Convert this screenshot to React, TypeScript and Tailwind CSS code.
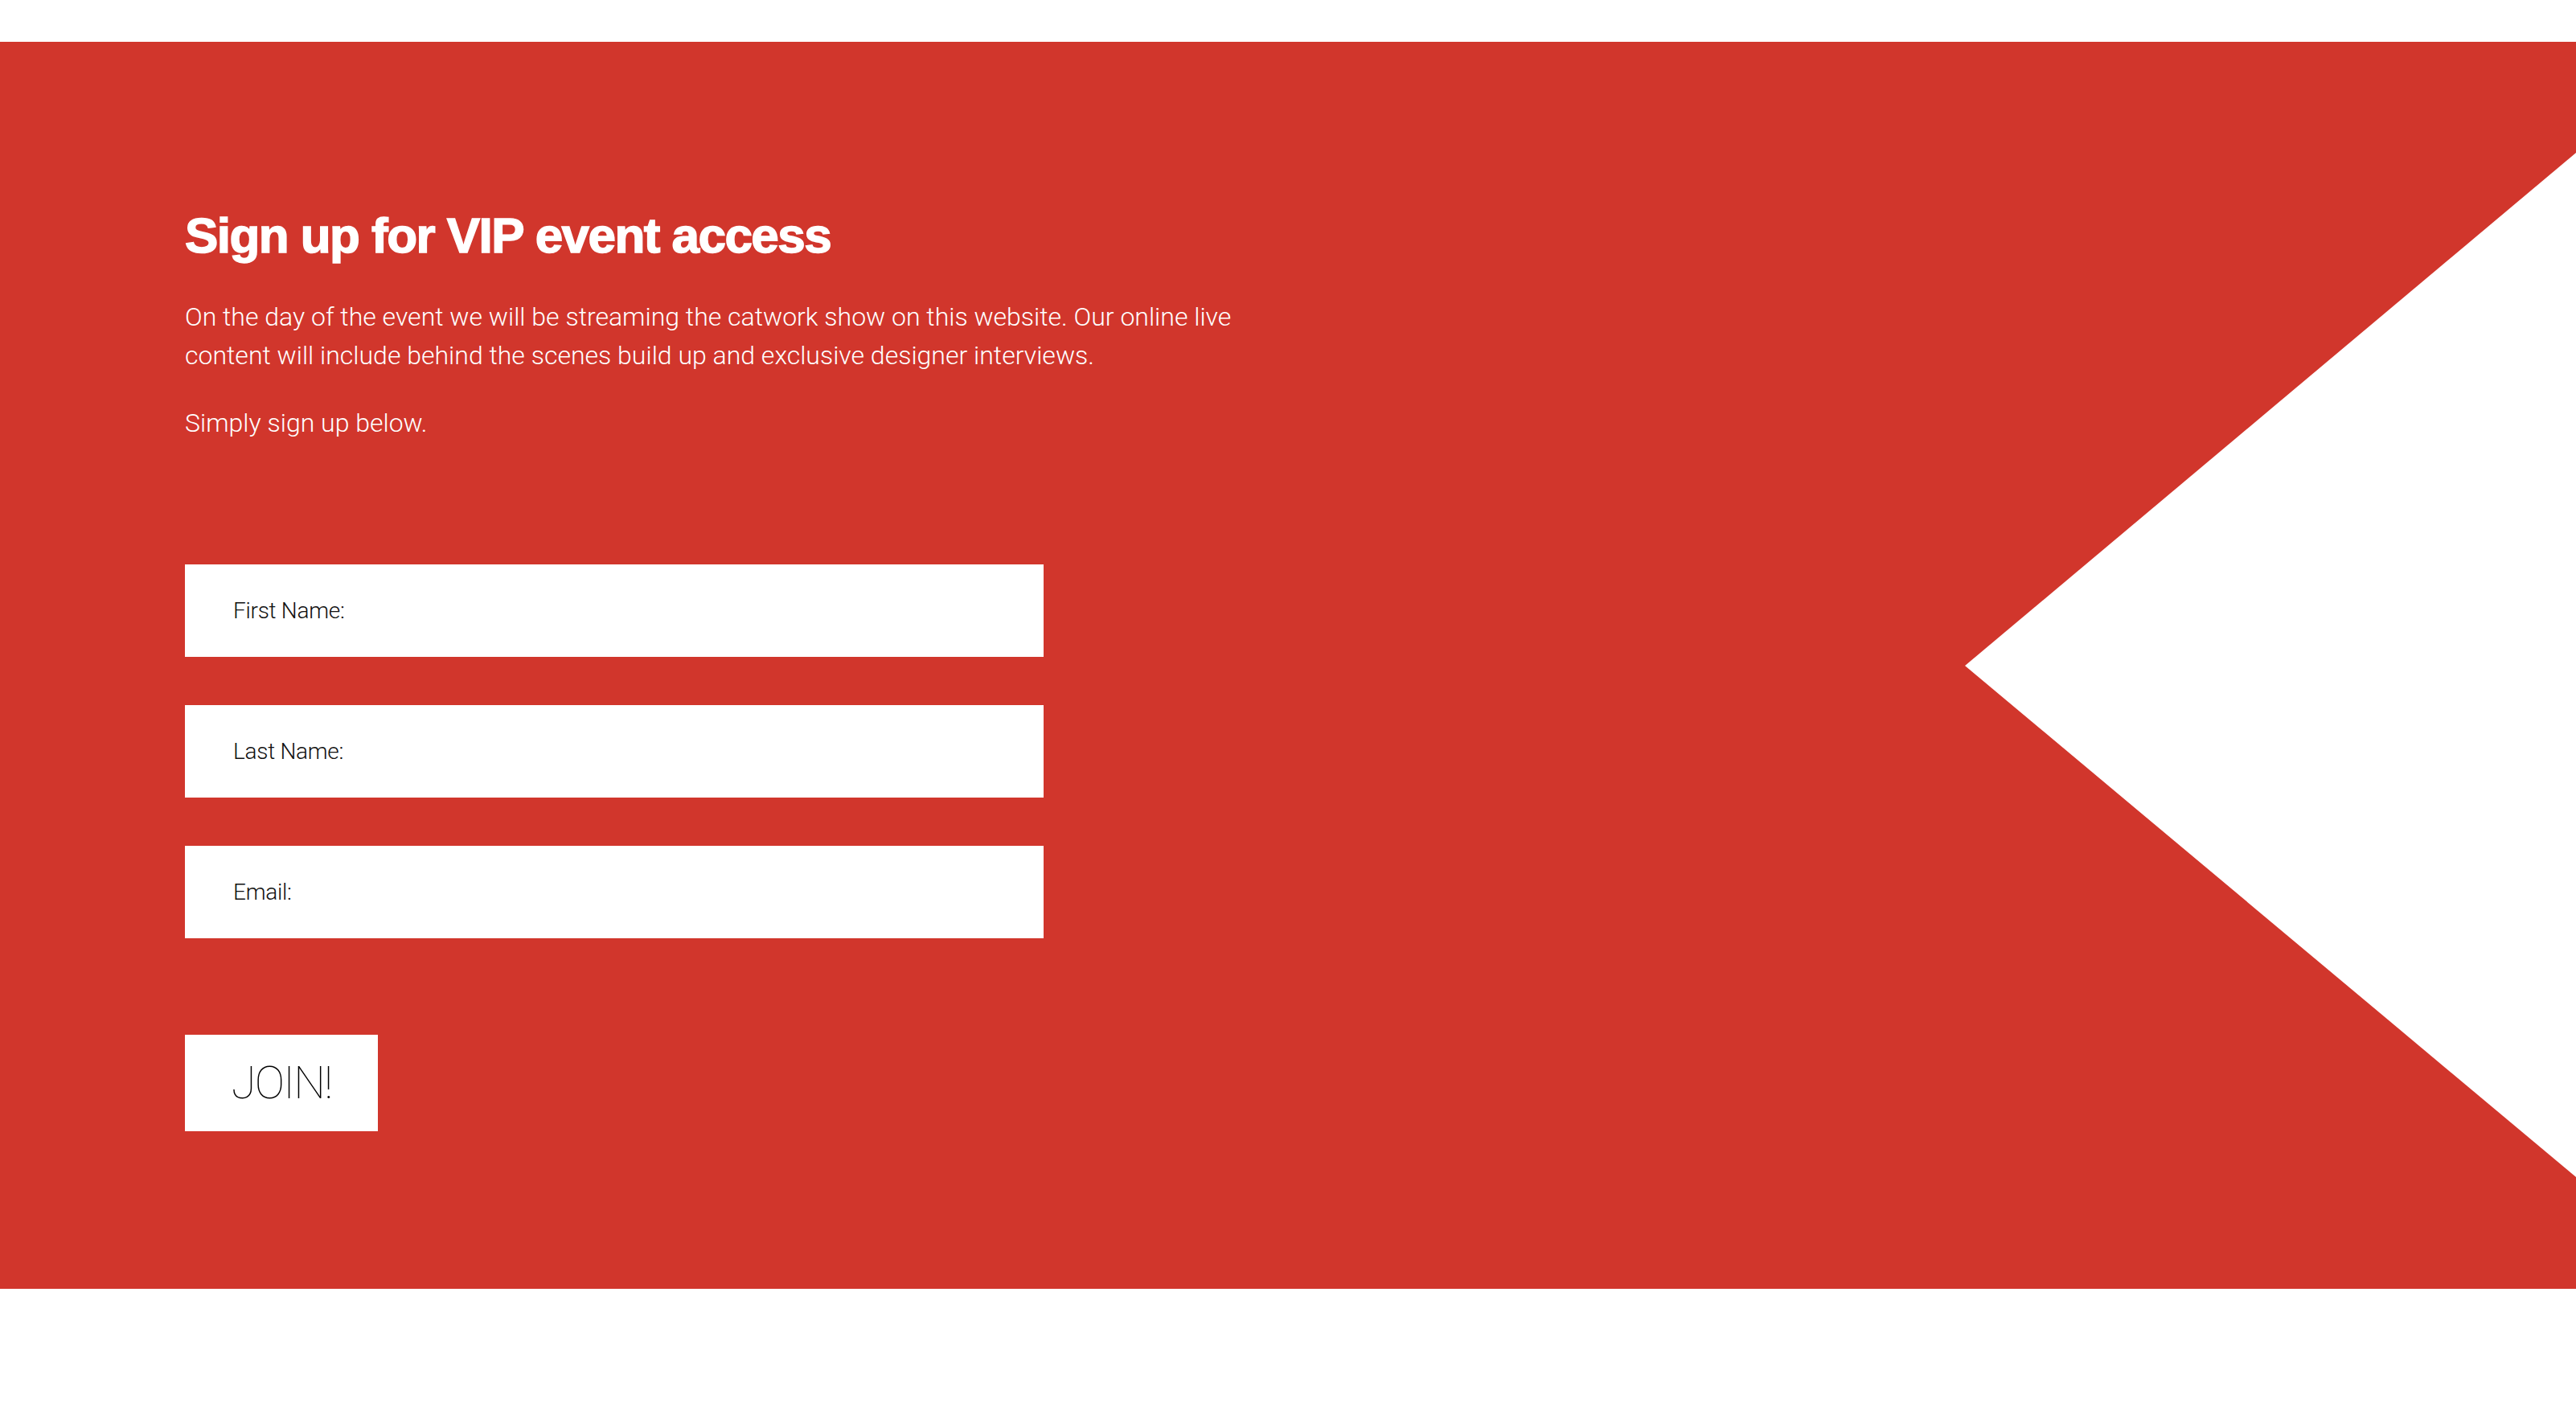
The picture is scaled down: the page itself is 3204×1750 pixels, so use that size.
import React from "react";

function Field({ label }: { label: string }) {
  return (
    <div className="flex h-[115px] w-[1068px] items-center bg-white pl-[60px]">
      <span className="text-[28px] font-light leading-none tracking-[-0.01em] text-[#111111] [font-family:Roboto,'Liberation_Sans',sans-serif]">
        {label}
      </span>
    </div>
  );
}

export default function App() {
  return (
    <div className="min-h-[1750px] w-full bg-white pt-[52px]">
      <section className="relative h-[1551px] w-full overflow-hidden bg-[#d1362c]">
        <svg
          className="absolute right-0 top-0 h-full w-[760px]"
          viewBox="0 0 760 1551"
          preserveAspectRatio="none"
        >
          <polygon points="0,776 760,138 760,1412" fill="#ffffff" />
        </svg>
        <div className="relative flex flex-col pl-[230px] pt-[210px]">
          <h1 className="text-[62px] font-bold leading-[62px] tracking-[-0.025em] text-white [-webkit-text-stroke:1.5px_white] [font-family:'Liberation_Sans',Arial,sans-serif]">
            Sign up for VIP event access
          </h1>
          <div className="mt-[46px] max-w-[1350px] text-[32px] font-light leading-[48px] text-white [font-family:Roboto,'Liberation_Sans',sans-serif]">
            <p>
              On the day of the event we will be streaming the catwork show on this website. Our online live
              content will include behind the scenes build up and exclusive designer interviews.
            </p>
            <p className="mt-[36px]">Simply sign up below.</p>
          </div>
          <form className="mt-[152px] flex flex-col gap-[60px]">
            <Field label="First Name:" />
            <Field label="Last Name:" />
            <Field label="Email:" />
          </form>
          <button
            type="button"
            className="mt-[120px] flex h-[120px] w-[240px] items-center justify-center bg-white text-[56px] font-thin leading-none tracking-[-0.03em] text-black [font-family:Roboto,'Liberation_Sans',sans-serif]"
          >
            JOIN!
          </button>
        </div>
      </section>
    </div>
  );
}
